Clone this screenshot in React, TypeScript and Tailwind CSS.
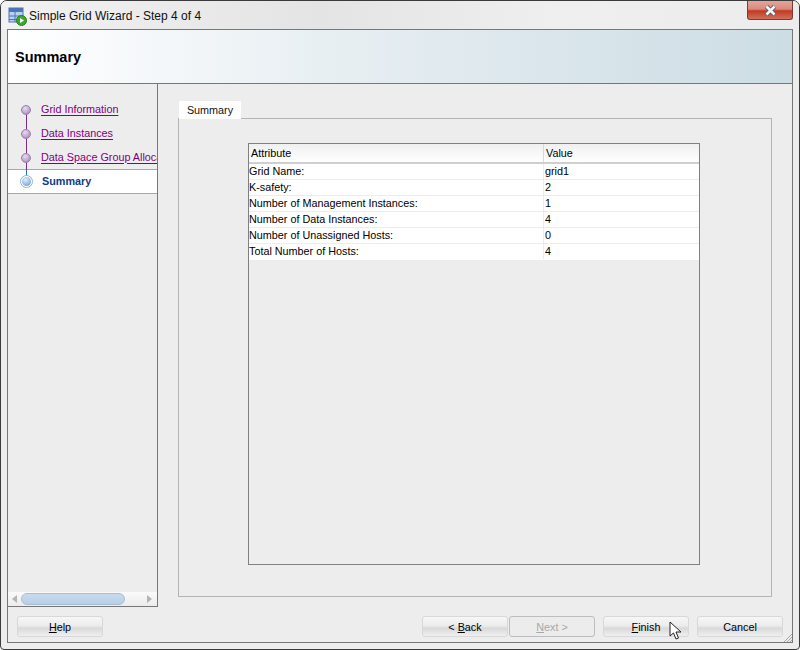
import React from 'react';

const rows = [
  ['Grid Name:', 'grid1'],
  ['K-safety:', '2'],
  ['Number of Management Instances:', '1'],
  ['Number of Data Instances:', '4'],
  ['Number of Unassigned Hosts:', '0'],
  ['Total Number of Hosts:', '4'],
];

const links = ['Grid Information', 'Data Instances', 'Data Space Group Allocation'];

function Dot() {
  return (
    <span className="z-10 h-[10px] w-[10px] shrink-0 rounded-full border border-[#9a7db0] bg-[radial-gradient(circle_at_40%_30%,#e8dcec,#a07fb8)]" />
  );
}

function WizardButton(props: { label: string; mnemonic?: string; before?: string; width: string; disabled?: boolean }) {
  const { label, mnemonic, before, width, disabled } = props;
  return (
    <button
      className={
        disabled
          ? `flex h-[21px] ${width} items-center justify-center whitespace-pre rounded-[3px] border border-[#bdbdbd] bg-[#ececec] pt-[1px] text-[#a8a8a8]`
          : `flex h-[21px] ${width} items-center justify-center whitespace-pre rounded-[3px] border border-[#d8d8d8] bg-[linear-gradient(#f7f7f7_0%,#ececec_45%,#d9d9d9_60%,#f0f0f0_100%)] pt-[1px] text-black`
      }
    >
      {before && <span>{before}</span>}
      {mnemonic && <span className="underline">{mnemonic}</span>}
      <span>{label}</span>
    </button>
  );
}

export default function App() {
  return (
    <div className="relative flex h-[650px] w-[800px] flex-col overflow-hidden rounded-t-[7px] rounded-b-[4px] border border-[#3a3a3a] bg-[#ededed] font-['Liberation_Sans',sans-serif] text-[10.8px] leading-none text-black">
      {/* title bar */}
      <div className="flex h-[28px] shrink-0 items-start bg-[linear-gradient(90deg,#f2f2f2,#e4e4e4_40%,#efefef_70%,#ececec)]">
        <svg width="20" height="20" viewBox="0 0 20 20" className="mt-[6px] ml-[7px]">
          <rect x="1" y="1" width="14" height="14" fill="#b9d0ee" stroke="#4a76b8" />
          <rect x="1" y="1" width="14" height="4" fill="#4a76b8" />
          <path d="M1 9h14M1 12.5h14M7 5v10" stroke="#4a76b8" />
          <circle cx="13.5" cy="13.5" r="5" fill="#3da92b" stroke="#2a7d1c" />
          <path d="M12 11l4 2.5-4 2.5z" fill="#fff" />
        </svg>
        <span className="mt-[9px] ml-[1px] text-[12px] text-[#111]">Simple Grid Wizard - Step 4 of 4</span>
        <div className="mr-[6px] ml-auto flex h-[19px] w-[46px] items-center justify-center rounded-b-[3px] border border-t-0 border-[#7d3a33] bg-[linear-gradient(#e4a59b_0%,#d98a7c_45%,#c23a20_55%,#d0705c_100%)]">
          <svg width="13" height="11" viewBox="0 0 13 11">
            <path d="M2.5 1.5l8 8M10.5 1.5l-8 8" stroke="#4b5a6e" strokeWidth="4.4" />
            <path d="M2.5 1.5l8 8M10.5 1.5l-8 8" stroke="#f2f4f6" strokeWidth="2.6" />
          </svg>
        </div>
      </div>

      {/* client area */}
      <div className="relative mr-[6px] mb-[6px] ml-[6px] flex min-h-0 flex-1 flex-col border border-[#777]">
        <div className="flex h-[54px] shrink-0 items-center border-b border-[#777] bg-[linear-gradient(90deg,#fff_0%,#e8eff3_40%,#ccdde4_100%)] pt-[2px] pl-[7px] text-[14.5px] font-bold">
          Summary
        </div>

        <div className="flex min-h-0 flex-1">
          {/* steps */}
          <div className="flex h-[523px] w-[150px] shrink-0 flex-col overflow-hidden border-r border-b border-[#777]">
            <div className="relative min-h-0 flex-1 pt-[14px]">
              <span className="absolute top-[26px] left-[18px] h-[60px] w-[1px] bg-[#7c2d90]" />
              <span className="absolute top-[86px] left-[18px] h-[8px] w-[1px] bg-[#2f6fb5]" />
              {links.map((link) => (
                <div key={link} className="flex h-[24px] items-center gap-[10px] pl-[13px] whitespace-nowrap text-[#800080]">
                  <Dot />
                  <span className="pb-[2px] underline underline-offset-2">{link}</span>
                </div>
              ))}
              <div className="-mt-[1px] flex h-[25px] items-center gap-[9px] border-y border-[#9aa9c5] bg-white pl-[12px] font-bold text-[#0f3a8c]">
                <span className="z-10 flex h-[13px] w-[13px] items-center justify-center rounded-full border border-[#8db4dc] bg-white">
                  <span className="h-[9px] w-[9px] rounded-full bg-[radial-gradient(circle_at_40%_30%,#dfeefb,#5f94d0)]" />
                </span>
                Summary
              </div>
            </div>
            <div className="flex h-[14px] shrink-0 items-center bg-[linear-gradient(#fafafa,#ececec)] pl-[4px]">
              <span className="h-0 w-0 border-y-[4px] border-r-[5px] border-y-transparent border-r-[#b4b4b4]" />
              <span className="ml-[4px] h-[12px] w-[104px] rounded-[6px] border border-[#a9bdd4] bg-[linear-gradient(#c9daee,#b9cfe6)]" />
              <span className="ml-[22px] h-0 w-0 border-y-[4px] border-l-[5px] border-y-transparent border-l-[#b4b4b4]" />
            </div>
          </div>

          {/* tab content */}
          <div className="flex min-w-0 flex-1 flex-col pt-[17px] pr-[20px] pl-[20px]">
            <div className="z-10 -mb-[1px] ml-[1px] flex h-[18px] w-[62px] shrink-0 items-center justify-center bg-white text-[#111]">Summary</div>
            <div className="flex h-[479px] flex-col border border-[#b4b4b4] pt-[24px] pr-[71px] pb-[31px] pl-[69px]">
              <div className="flex min-h-0 flex-1 flex-col border border-[#808080]">
                <div className="flex h-[20px] shrink-0 border-b-2 border-[#cfcfcf] bg-[linear-gradient(#f0f0f0,#fff)]">
                  <div className="flex w-[295px] items-center border-r border-[#d8d8d8] pl-[2px]">Attribute</div>
                  <div className="flex flex-1 items-center pl-[2px]">Value</div>
                </div>
                {rows.map(([name, value]) => (
                  <div key={name} className="flex h-[16px] shrink-0 border-b border-[#ececec] bg-white last:border-b-white">
                    <div className="flex w-[295px] items-center border-r border-[#ececec]">{name}</div>
                    <div className="flex flex-1 items-center pl-[1px]">{value}</div>
                  </div>
                ))}
              </div>
            </div>
          </div>
        </div>

        {/* buttons */}
        <div className="flex h-[35px] shrink-0 items-start pt-[9px] pr-[9px] pl-[9px]">
          <WizardButton label="elp" mnemonic="H" width="w-[86px]" />
          <div className="ml-auto flex">
            <WizardButton before="< " mnemonic="B" label="ack" width="w-[86px]" />
            <div className="w-[1px]" />
            <WizardButton mnemonic="N" label="ext >" width="w-[86px]" disabled />
            <div className="w-[8px]" />
            <WizardButton mnemonic="F" label="inish" width="w-[86px]" />
            <div className="w-[8px]" />
            <WizardButton label="Cancel" width="w-[86px]" />
          </div>
        </div>

        {/* mouse pointer */}
        <svg width="14" height="20" viewBox="0 0 14 20" className="absolute right-[109px] bottom-[1px]">
          <path d="M1 1v14l3.5-3 2.5 6 2.5-1-2.5-6H12z" fill="#fff" stroke="#222" strokeWidth="1" />
        </svg>

        {/* resize grip */}
        <svg width="9" height="9" viewBox="0 0 9 9" className="absolute right-0 bottom-0">
          <path d="M9 1L1 9M9 4L4 9M9 7L7 9" stroke="#a8a8a8" strokeWidth="1" />
        </svg>
      </div>
    </div>
  );
}
